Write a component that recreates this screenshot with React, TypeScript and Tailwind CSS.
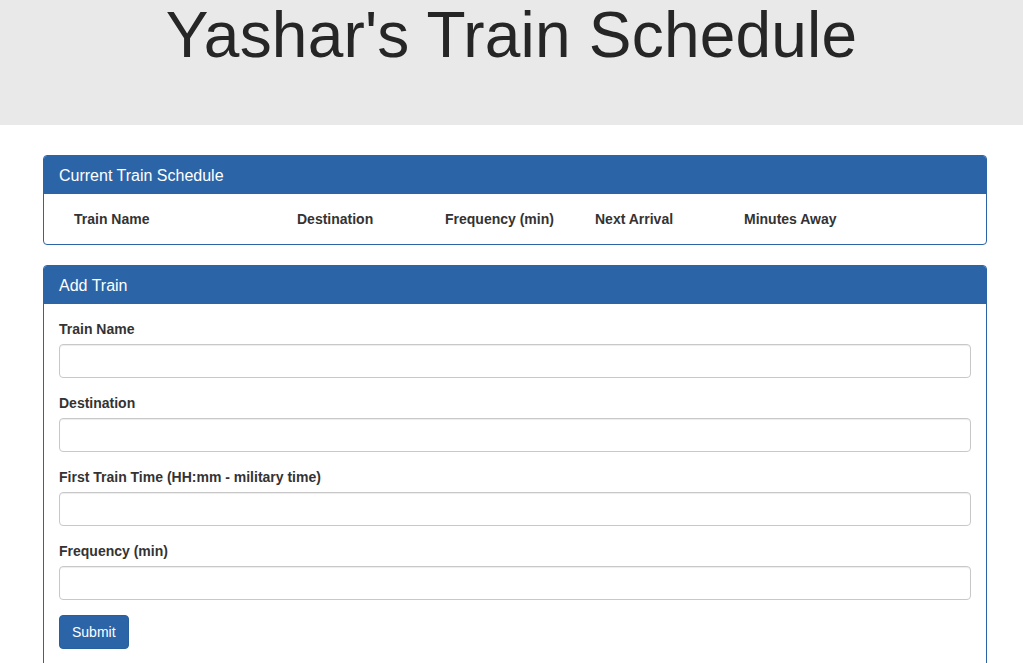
const columns = [
    { label: 'Train Name', width: 'w-[223px]' },
    { label: 'Destination', width: 'w-[148px]' },
    { label: 'Frequency (min)', width: 'w-[150px]' },
    { label: 'Next Arrival', width: 'w-[149px]' },
    { label: 'Minutes Away', width: 'flex-1' }
]

const fields = [
    'Train Name',
    'Destination',
    'First Train Time (HH:mm - military time)',
    'Frequency (min)'
]

const Panel = ({ title, children }: { title: string; children: React.ReactNode }) => (
    <div className="overflow-hidden rounded-[4px] border border-[#2b65a8] bg-white">
        <div className="bg-[#2b65a8] px-[15px] pt-[11px] pb-[9px] text-[16px] leading-[18px] text-white">
            {title}
        </div>
        {children}
    </div>
)

export default function App() {
    return (
        <div className="min-h-[663px] bg-white font-['Liberation_Sans',Arial,sans-serif] text-[14px] text-[#333]">
            <div className="h-[125px] bg-[#e9e9e9]">
                <h1 className="pt-[1px] text-center text-[64px] leading-[69px] tracking-[0.2px] text-[#262626]">
                    Yashar's Train Schedule
                </h1>
            </div>

            <div className="ml-[43px] mt-[30px] flex w-[944px] flex-col gap-[20px]">
                <Panel title="Current Train Schedule">
                    <div className="flex h-[50px] items-center pl-[30px] pt-[1px] font-bold">
                        {columns.map((col) => (
                            <div key={col.label} className={col.width}>
                                {col.label}
                            </div>
                        ))}
                    </div>
                </Panel>

                <Panel title="Add Train">
                    <form
                        onSubmit={(e) => e.preventDefault()}
                        className="flex flex-col gap-[15px] px-[15px] pt-[15px] pb-[20px]"
                    >
                        {fields.map((label) => (
                            <div key={label} className="flex flex-col gap-[5px]">
                                <label className="text-[14px] font-bold leading-[20px]">
                                    {label}
                                </label>
                                <input
                                    type="text"
                                    className="h-[34px] rounded-[4px] border border-[#c8c8c8] px-3 shadow-[inset_0_1px_1px_rgba(0,0,0,0.075)] outline-none"
                                />
                            </div>
                        ))}
                        <div>
                            <button
                                type="submit"
                                className="h-[34px] rounded-[4px] border border-[#28609e] bg-[#2b65a8] px-[12px] text-[14px] text-white"
                            >
                                Submit
                            </button>
                        </div>
                    </form>
                </Panel>
            </div>
        </div>
    )
}
